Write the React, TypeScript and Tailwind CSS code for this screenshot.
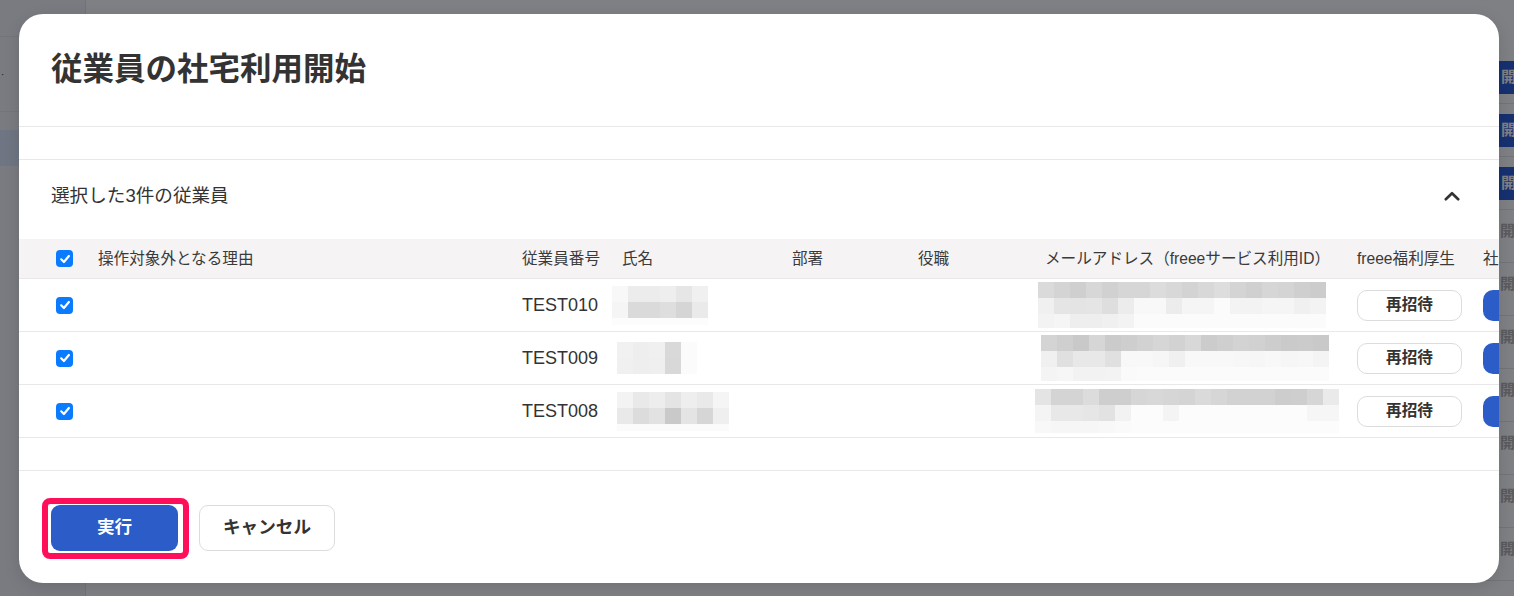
import React from "react";

type Mosaic = { cls: string; rows: number[][]; heights: number[] };

const g = (v: number) => `rgb(${v},${v},${v})`;

function MosaicSvg({ m }: { m: Mosaic }) {
  const cols = Math.max(...m.rows.map((r) => r.length));
  const w = cols * 16;
  const h = m.heights.reduce((a, b) => a + b, 0);
  let y = 0;
  return (
    <svg width={w} height={h} className={m.cls} aria-hidden>
      {m.rows.map((row, ri) => {
        const top = y;
        y += m.heights[ri];
        return row.map((v, ci) => (
          <rect key={`${ri}-${ci}`} x={ci * 16} y={top} width={16} height={m.heights[ri]} fill={g(v)} />
        ));
      })}
    </svg>
  );
}

const rows: { id: string; name: Mosaic; mail: Mosaic }[] = [
  {
    id: "TEST010",
    name: {
      cls: "ml-[-10px]",
      heights: [16, 16, 7],
      rows: [
        [248, 236, 236, 238, 230, 240],
        [245, 218, 218, 222, 213, 234],
        [252, 252, 252, 252, 252, 252],
      ],
    },
    mail: {
      cls: "ml-[-7px]",
      heights: [16, 16, 14],
      rows: [
        [218, 212, 207, 215, 209, 214, 214, 220, 216, 211, 216, 221, 212, 208, 214, 212, 207, 204],
        [240, 229, 228, 229, 222, 236, 248, 248, 236, 245, 245, 251, 243, 243, 245, 245, 240, 243],
        [243, 245, 238, 238, 240, 243, 251, 251, 251, 251, 251, 251, 251, 251, 251, 251, 251, 251],
      ],
    },
  },
  {
    id: "TEST009",
    name: {
      cls: "ml-[-5px]",
      heights: [16, 16],
      rows: [
        [241, 238, 240, 217, 251],
        [240, 238, 239, 216, 251],
      ],
    },
    mail: {
      cls: "ml-[-4px]",
      heights: [16, 16, 14],
      rows: [
        [212, 207, 201, 214, 203, 206, 210, 214, 210, 216, 204, 207, 211, 209, 205, 202, 203, 201],
        [240, 224, 232, 232, 224, 248, 248, 246, 240, 248, 248, 248, 247, 246, 248, 246, 247, 244],
        [244, 246, 242, 242, 243, 250, 251, 251, 251, 251, 251, 251, 251, 251, 251, 251, 251, 251],
      ],
    },
  },
  {
    id: "TEST008",
    name: {
      cls: "ml-[-5px]",
      heights: [16, 16, 7],
      rows: [
        [243, 233, 237, 228, 238, 233, 245],
        [233, 220, 226, 201, 228, 214, 239],
        [251, 251, 251, 251, 251, 251, 251],
      ],
    },
    mail: {
      cls: "ml-[-10px]",
      heights: [16, 16, 12],
      rows: [
        [228, 212, 212, 220, 206, 206, 214, 216, 214, 212, 218, 214, 210, 210, 210, 205, 206, 214, 234],
        [244, 232, 232, 230, 226, 242, 252, 252, 244, 252, 252, 252, 252, 252, 252, 252, 252, 246, 246],
        [248, 246, 246, 246, 248, 250, 252, 252, 252, 252, 252, 252, 252, 252, 252, 252, 252, 252, 252],
      ],
    },
  },
];

function Check() {
  return (
    <span className="flex h-[17px] w-[17px] items-center justify-center rounded-[4px] bg-[#0a7bff]">
      <svg width="12" height="12" viewBox="0 0 12 12" fill="none">
        <path d="M2.2 6.3 L4.9 9 L9.9 3" stroke="white" strokeWidth="2.2" strokeLinecap="round" strokeLinejoin="round" />
      </svg>
    </span>
  );
}

const gridCols = "grid w-max grid-cols-[67px_424px_100px_170px_126px_127px_312px_126px_150px] items-center";

export default function App() {
  return (
    <div className="relative h-[596px] w-[1514px] overflow-hidden bg-white font-['Liberation_Sans','Noto_Sans_CJK_JP',sans-serif]">
      {/* background page */}
      <div className="flex h-full">
        <aside className="flex w-[86px] shrink-0 flex-col border-r border-[#e3e5ea] bg-[#f2f4f7]">
          <div className="h-[37px] border-b border-[#e6e8ec]" />
          <div className="flex h-[75px] items-center border-b border-[#e6e8ec] pl-[1px] text-[10px] text-[#333]">·</div>
          <div className="mt-[18px] h-[36px] bg-[#dfe9fb]" />
        </aside>
        <main className="grid flex-1 grid-cols-[1fr_15px] content-start pt-[51px]">
          {Array.from({ length: 10 }).map((_, i) => (
            <React.Fragment key={i}>
              <div className="h-[53px] border-b border-[#e6e6e6]" />
              <div className={`flex h-[53px] border-b border-[#e6e6e6] ${i < 3 ? "items-center" : "items-start pt-[10px]"}`}>
                {i < 3 ? (
                  <span className="flex h-[33px] w-[60px] shrink-0 items-center bg-[#2f5fd6] pl-[2px] text-[15px] font-bold whitespace-nowrap text-white">
                    開始
                  </span>
                ) : (
                  <span className="shrink-0 pl-[1px] text-[15px] font-bold whitespace-nowrap text-[#b4b4b4]">開始</span>
                )}
              </div>
            </React.Fragment>
          ))}
        </main>
      </div>

      {/* overlay */}
      <div className="absolute inset-0 bg-[rgba(0,2,10,0.5)]" />

      {/* modal */}
      <div className="absolute left-[19px] top-[14px] flex h-[569px] w-[1480px] flex-col overflow-hidden rounded-[24px] bg-white shadow-[0_4px_16px_rgba(0,0,0,0.12)]">
        <header className="flex h-[113px] shrink-0 items-center border-b border-[#e8e8e8] px-8">
          <h1 className="text-[31.5px] font-bold leading-none text-[#333]">従業員の社宅利用開始</h1>
        </header>

        <div className="flex-1 overflow-hidden border-b border-[#e8e8e8] pt-[32px]">
          <section className="border-t border-[#e8e8e8]">
            <div className="flex h-[72px] items-center justify-between pl-8 pr-[39px]">
              <span className="text-[18.6px] leading-none text-[#333]">選択した3件の従業員</span>
              <svg width="16" height="10" viewBox="0 0 16 10" fill="none">
                <path d="M1.8 8.3 L8 2.2 L14.2 8.3" stroke="#333" strokeWidth="2.6" strokeLinecap="round" strokeLinejoin="round" />
              </svg>
            </div>
            <div className="mt-[7px]">
              <div className={`${gridCols} h-[40px] border-b border-[#e8e8e8] bg-[#f5f3f4] text-[15.6px] leading-none text-[#3a3a3a]`}>
                <div className="pl-[37px]"><Check /></div>
                <div className="pl-3">操作対象外となる理由</div>
                <div className="pl-3">従業員番号</div>
                <div className="pl-3">氏名</div>
                <div className="pl-3">部署</div>
                <div className="pl-3">役職</div>
                <div className="pl-3">メールアドレス（freeeサービス利用ID）</div>
                <div className="pl-3">freee福利厚生</div>
                <div className="pl-3">社宅利用</div>
              </div>
              {rows.map((r) => (
                <div key={r.id} className={`${gridCols} h-[53px] border-b border-[#e8e8e8] text-[18px] leading-none text-[#333]`}>
                  <div className="pl-[37px]"><Check /></div>
                  <div />
                  <div className="pl-3">{r.id}</div>
                  <div className="flex pl-3"><MosaicSvg m={r.name} /></div>
                  <div />
                  <div />
                  <div className="flex pl-3"><MosaicSvg m={r.mail} /></div>
                  <div className="pl-3">
                    <button className="flex h-[31px] w-[105px] items-center justify-center rounded-[10px] border border-[#dcdcdc] bg-white text-[15.6px] font-bold text-[#333]">
                      再招待
                    </button>
                  </div>
                  <div className="pl-3">
                    <button className="flex h-[31px] w-[110px] items-center justify-center rounded-[10px] bg-[#2b5cc8] text-[15.6px] font-bold text-white">
                      開始
                    </button>
                  </div>
                </div>
              ))}
            </div>
            <div className="h-[33px]" />
          </section>
        </div>

        <footer className="flex h-[112px] shrink-0 items-center gap-[21px] pl-8 pt-[1px]">
          <div className="relative">
            <button className="flex h-[46px] w-[127px] items-center justify-center rounded-[9px] bg-[#2b5cc8] text-[17.6px] font-bold text-white">
              実行
            </button>
            <span className="pointer-events-none absolute -bottom-[8px] -left-[9px] -right-[11px] -top-[7px] rounded-[8px] border-[6px] border-[#ff0f5a]" />
          </div>
          <button className="flex h-[46px] w-[136px] items-center justify-center rounded-[9px] border border-[#dcdcdc] bg-white text-[17.6px] font-bold text-[#333]">
            キャンセル
          </button>
        </footer>
      </div>
    </div>
  );
}
